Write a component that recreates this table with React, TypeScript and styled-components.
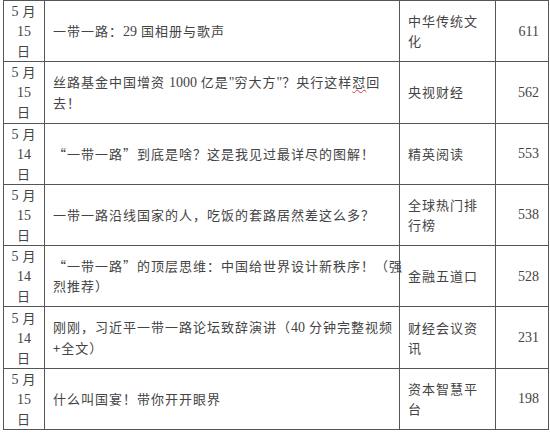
import React from 'react';
import styled, { createGlobalStyle } from 'styled-components';

const GlobalStyle = createGlobalStyle`
  body {
    margin: 0;
    background: #fff;
  }
`;

const Table = styled.table`
  margin-left: 3px;
  width: 545px;
  height: 430px;
  table-layout: fixed;
  border-collapse: collapse;
  font-family: 'Noto Sans CJK SC', sans-serif;
  font-size: 13px;
  letter-spacing: 1px;
  line-height: 20px;
  color: #444;
`;

const Cell = styled.td<{ $align?: 'left' | 'center' | 'right' }>`
  border: 1px solid #555;
  padding: 0 8px;
  vertical-align: middle;
  text-align: ${(p) => p.$align ?? 'left'};
  white-space: pre;
  overflow: visible;
`;

const TitleCell = styled(Cell)`
  padding: 0 4px 0 8px;
`;

const DateCell = styled(Cell)`
  padding: 0;
`;

const DateLine = styled.div`
  display: block;
  height: 20px;
`;

const SourceCell = styled(Cell)`
  padding: 0 6px 0 8px;
`;

const CountCell = styled(Cell)`
  padding: 0 9px 0 0;
  letter-spacing: 0;
`;

const Num = styled.span`
  font-family: 'Liberation Serif', 'Noto Sans CJK SC', serif;
  font-size: 14px;
  letter-spacing: 0;
`;

const Typo = styled.span`
  text-decoration: underline wavy #d23b3b;
  text-decoration-thickness: 1px;
  text-underline-offset: 2px;
`;

type Row = {
  day: string;
  title: React.ReactNode;
  source: string;
  count: string;
};

const rows: Row[] = [
  {
    day: '15',
    title: (
      <>
        一带一路：<Num>29</Num> 国相册与歌声
      </>
    ),
    source: '中华传统文\n化',
    count: '611',
  },
  {
    day: '15',
    title: (
      <>
        丝路基金中国增资 <Num>1000</Num> 亿是<Num>"</Num>穷大方<Num>"</Num>？央行这样
        <Typo>怼</Typo>回{'\n'}去！
      </>
    ),
    source: '央视财经',
    count: '562',
  },
  {
    day: '14',
    title: '“一带一路”到底是啥？这是我见过最详尽的图解！',
    source: '精英阅读',
    count: '553',
  },
  {
    day: '15',
    title: '一带一路沿线国家的人，吃饭的套路居然差这么多？',
    source: '全球热门排\n行榜',
    count: '538',
  },
  {
    day: '14',
    title: '“一带一路”的顶层思维：中国给世界设计新秩序！（强\n烈推荐）',
    source: '金融五道口',
    count: '528',
  },
  {
    day: '14',
    title: (
      <>
        刚刚，习近平一带一路论坛致辞演讲（<Num>40</Num> 分钟完整视频{'\n'}+全文）
      </>
    ),
    source: '财经会议资\n讯',
    count: '231',
  },
  {
    day: '15',
    title: '什么叫国宴！带你开开眼界',
    source: '资本智慧平\n台',
    count: '198',
  },
];

export default function App() {
  return (
    <>
      <GlobalStyle />
      <Table>
        <colgroup>
          <col style={{ width: 41 }} />
          <col style={{ width: 355 }} />
          <col style={{ width: 96 }} />
          <col style={{ width: 53 }} />
        </colgroup>
        <tbody>
          {rows.map((r, i) => (
            <tr key={i}>
              <DateCell $align="center">
                <DateLine>
                  <Num>5</Num> 月
                </DateLine>
                <DateLine>
                  <Num>{r.day}</Num>
                </DateLine>
                <DateLine>日</DateLine>
              </DateCell>
              <TitleCell>{r.title}</TitleCell>
              <SourceCell>{r.source}</SourceCell>
              <CountCell $align="right">
                <Num>{r.count}</Num>
              </CountCell>
            </tr>
          ))}
        </tbody>
      </Table>
    </>
  );
}
